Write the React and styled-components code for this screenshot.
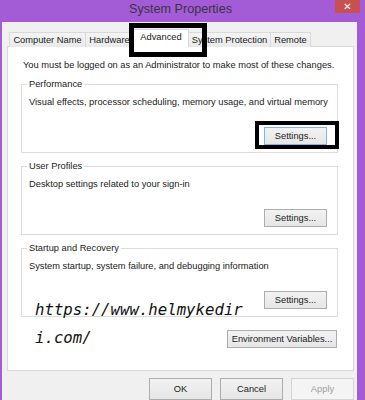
import React from "react";
import styled, { createGlobalStyle } from "styled-components";

const GlobalStyle = createGlobalStyle`
  html, body {
    margin: 0;
    padding: 0;
    background: #a45cd6;
  }
  * {
    box-sizing: border-box;
  }
`;

const tabs = [
  { label: "Computer Name", width: 77 },
  { label: "Hardware", width: 49 },
  { label: "Advanced", width: 56, active: true },
  { label: "System Protection", width: 83 },
  { label: "Remote", width: 41 }
];

const groups = [
  {
    title: "Performance",
    text: "Visual effects, processor scheduling, memory usage, and virtual memory",
    focused: true
  },
  {
    title: "User Profiles",
    text: "Desktop settings related to your sign-in"
  },
  {
    title: "Startup and Recovery",
    text: "System startup, system failure, and debugging information"
  }
];

const Window = styled.div`
  position: relative;
  width: 365px;
  height: 400px;
  overflow: hidden;
  background: #a45cd6;
  font-family: "Liberation Sans", Arial, sans-serif;
  font-size: 9.3px;
  color: #1a1a1a;
`;

const TitleBar = styled.div`
  position: relative;
  height: 22px;
  display: flex;
  align-items: center;
  justify-content: center;
  padding-right: 4px;
`;

const Title = styled.span`
  font-size: 12.6px;
  color: #3a3346;
  margin-top: -5px;
`;

const CloseButton = styled.div`
  position: absolute;
  top: 0;
  right: 5px;
  width: 25px;
  height: 13px;
  background: #c75050;
  color: #fff;
  font-family: "DejaVu Sans", sans-serif;
  font-weight: bold;
  font-size: 10px;
  line-height: 13px;
  text-align: center;
`;

const Client = styled.div`
  margin: 0 8px 0 2px;
  height: 378px;
  background: #f0f0f0;
  padding: 7px 3px 0 5px;
`;

const TabStrip = styled.div`
  display: flex;
  align-items: flex-end;
  height: 18px;
  padding-left: 2px;
  margin-bottom: -1px;
  position: relative;
  z-index: 1;
`;

const Tab = styled.div`
  width: ${p => p.$width}px;
  height: ${p => (p.$active ? 18 : 15)}px;
  border: 1px solid #d9d9d9;
  border-bottom: ${p => (p.$active ? "1px solid #fff" : "none")};
  margin-right: -1px;
  background: ${p =>
    p.$active ? "#fff" : "linear-gradient(#f4f4f4, #eaeaea)"};
  display: flex;
  align-items: center;
  justify-content: center;
  padding-bottom: ${p => (p.$active ? 3 : 0)}px;
  white-space: nowrap;
`;

const Panel = styled.div`
  position: relative;
  height: 325px;
  background: #fff;
  border: 1px solid #d9d9d9;
  padding: 13px 15px 0 13px;
`;

const Intro = styled.div`
  line-height: 11px;
  padding-left: 2px;
  white-space: nowrap;
`;

const Group = styled.div`
  position: relative;
  height: 69px;
  margin-top: 13px;
  border: 1px solid #dcdcdc;
  display: flex;
  flex-direction: column;
  padding: 11px 10px 7px 7px;
`;

const Legend = styled.span`
  position: absolute;
  top: -7px;
  left: 5px;
  padding: 0 2px;
  background: #fff;
  line-height: 12px;
`;

const Desc = styled.div`
  line-height: 12px;
  white-space: nowrap;
`;

const ButtonRow = styled.div`
  display: flex;
  justify-content: flex-end;
  gap: 8px;
  margin-top: ${p => p.$top || "auto"};
  padding-right: ${p => p.$right || 0}px;
`;

const Button = styled.div`
  width: ${p => p.$width || 63}px;
  height: ${p => p.$height || 18}px;
  display: flex;
  align-items: center;
  justify-content: center;
  border: 1px solid ${p =>
    p.$focused ? "#7eb4ea" : p.$disabled ? "#d5d5d5" : "#adadad"};
  background: ${p =>
    p.$disabled ? "#f4f4f4" : "linear-gradient(#f2f2f2, #e6e6e6)"};
  color: ${p => (p.$disabled ? "#a0a0a0" : "#1a1a1a")};
  white-space: nowrap;
`;

const Watermark = styled.div`
  position: absolute;
  left: 27px;
  top: 249px;
  display: flex;
  flex-direction: column;
  align-items: flex-start;
  font-family: "DejaVu Sans Mono", monospace;
  font-style: oblique;
  font-size: 15.7px;
  line-height: 28px;
  color: #111;
  pointer-events: none;
`;

const WatermarkLine = styled.span`
  white-space: nowrap;
`;

const Highlight = styled.div`
  position: absolute;
  left: ${p => p.$x}px;
  top: ${p => p.$y}px;
  width: ${p => p.$w}px;
  height: ${p => p.$h}px;
  border: ${p => p.$t}px solid #000;
  pointer-events: none;
  z-index: 5;
`;

export default function App() {
  return (
    <>
      <GlobalStyle />
      <Window>
        <TitleBar>
          <Title>System Properties</Title>
          <CloseButton>✕</CloseButton>
        </TitleBar>
        <Client>
          <TabStrip>
            {tabs.map(t => (
              <Tab key={t.label} $width={t.width} $active={t.active}>
                {t.label}
              </Tab>
            ))}
          </TabStrip>
          <Panel>
            <Intro>
              You must be logged on as an Administrator to make most of these
              changes.
            </Intro>
            {groups.map(g => (
              <Group key={g.title}>
                <Legend>{g.title}</Legend>
                <Desc>{g.text}</Desc>
                <ButtonRow>
                  <Button $focused={g.focused}>Settings...</Button>
                </ButtonRow>
              </Group>
            ))}
            <ButtonRow $top="13px" $right={1}>
              <Button $width={110}>Environment Variables...</Button>
            </ButtonRow>
            <Watermark>
              <WatermarkLine>https://www.helmykedir</WatermarkLine>
              <WatermarkLine>i.com/</WatermarkLine>
            </Watermark>
          </Panel>
          <ButtonRow $top="7px">
            <Button $height={22}>OK</Button>
            <Button $height={22}>Cancel</Button>
            <Button $height={22} $disabled>
              Apply
            </Button>
          </ButtonRow>
        </Client>
        <Highlight $x={129} $y={23} $w={78} $h={34} $t={5} />
        <Highlight $x={255} $y={121} $w={84} $h={28} $t={4} />
      </Window>
    </>
  );
}
